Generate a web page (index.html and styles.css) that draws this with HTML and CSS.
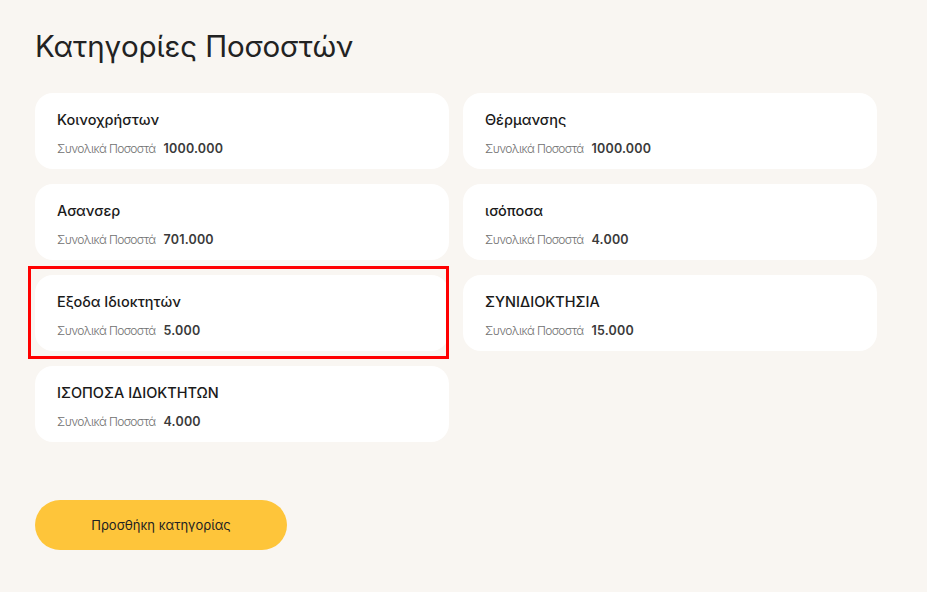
FILE: index.html
```html
<!DOCTYPE html>
<html lang="el">
<head>
<meta charset="utf-8">
<link rel="stylesheet" href="styles.css">
</head>
<body>
<main class="page">
  <h1 class="title">Κατηγορίες Ποσοστών</h1>
  <div class="grid">
    <div class="card"><div class="name">Κοινοχρήστων</div><div class="meta"><span class="label">Συνολικά Ποσοστά</span><span class="value">1000.000</span></div></div>
    <div class="card"><div class="name">Θέρμανσης</div><div class="meta"><span class="label">Συνολικά Ποσοστά</span><span class="value">1000.000</span></div></div>
    <div class="card"><div class="name">Ασανσερ</div><div class="meta"><span class="label">Συνολικά Ποσοστά</span><span class="value">701.000</span></div></div>
    <div class="card"><div class="name">ισόποσα</div><div class="meta"><span class="label">Συνολικά Ποσοστά</span><span class="value">4.000</span></div></div>
    <div class="card highlighted"><div class="name">Εξοδα Ιδιοκτητών</div><div class="meta"><span class="label">Συνολικά Ποσοστά</span><span class="value">5.000</span></div></div>
    <div class="card"><div class="name">ΣΥΝΙΔΙΟΚΤΗΣΙΑ</div><div class="meta"><span class="label">Συνολικά Ποσοστά</span><span class="value">15.000</span></div></div>
    <div class="card"><div class="name">ΙΣΟΠΟΣΑ ΙΔΙΟΚΤΗΤΩΝ</div><div class="meta"><span class="label">Συνολικά Ποσοστά</span><span class="value">4.000</span></div></div>
  </div>
  <button class="add-btn">Προσθήκη κατηγορίας</button>
</main>
</body>
</html>
```
FILE: styles.css
```css
* { box-sizing: border-box; }
html, body { margin: 0; padding: 0; }
body {
  background: #f9f6f2;
  font-family: "Inter", "Noto Sans", sans-serif;
  color: #1f1f1f;
  width: 927px;
  height: 592px;
  overflow: hidden;
}
.page {
  padding: 28px 0 0 35px;
}
.title {
  margin: 0;
  font-size: 29.5px;
  font-weight: 400;
  line-height: 36px;
  color: #222;
  letter-spacing: -0.1px;
}
.grid {
  margin-top: 29px;
  display: grid;
  grid-template-columns: 414px 414px;
  column-gap: 14px;
  row-gap: 15px;
}
.card {
  position: relative;
  background: #fff;
  border-radius: 18px;
  height: 76px;
  padding: 17px 22px 0 22px;
}
.name {
  font-size: 14.5px;
  font-weight: 500;
  line-height: 20px;
  color: #1a1a1a;
}
.meta {
  margin-top: 9px;
  display: flex;
  align-items: baseline;
  gap: 8px;
  line-height: 20px;
}
.label {
  font-size: 12px;
  font-weight: 300;
  color: #707070;
  letter-spacing: -0.6px;
}
.value {
  font-size: 12.5px;
  font-weight: 600;
  color: #3a3a3a;
  letter-spacing: 0.2px;
}
.highlighted::after {
  content: "";
  position: absolute;
  left: -7px;
  top: -9px;
  right: 0;
  bottom: -8px;
  border: 3px solid #ff0000;
  pointer-events: none;
}
.add-btn {
  display: block;
  margin-top: 58px;
  width: 252px;
  height: 50px;
  border: none;
  border-radius: 25px;
  background: #fec53a;
  font-family: inherit;
  font-size: 13px;
  font-weight: 400;
  color: #222;
  cursor: pointer;
}
```
